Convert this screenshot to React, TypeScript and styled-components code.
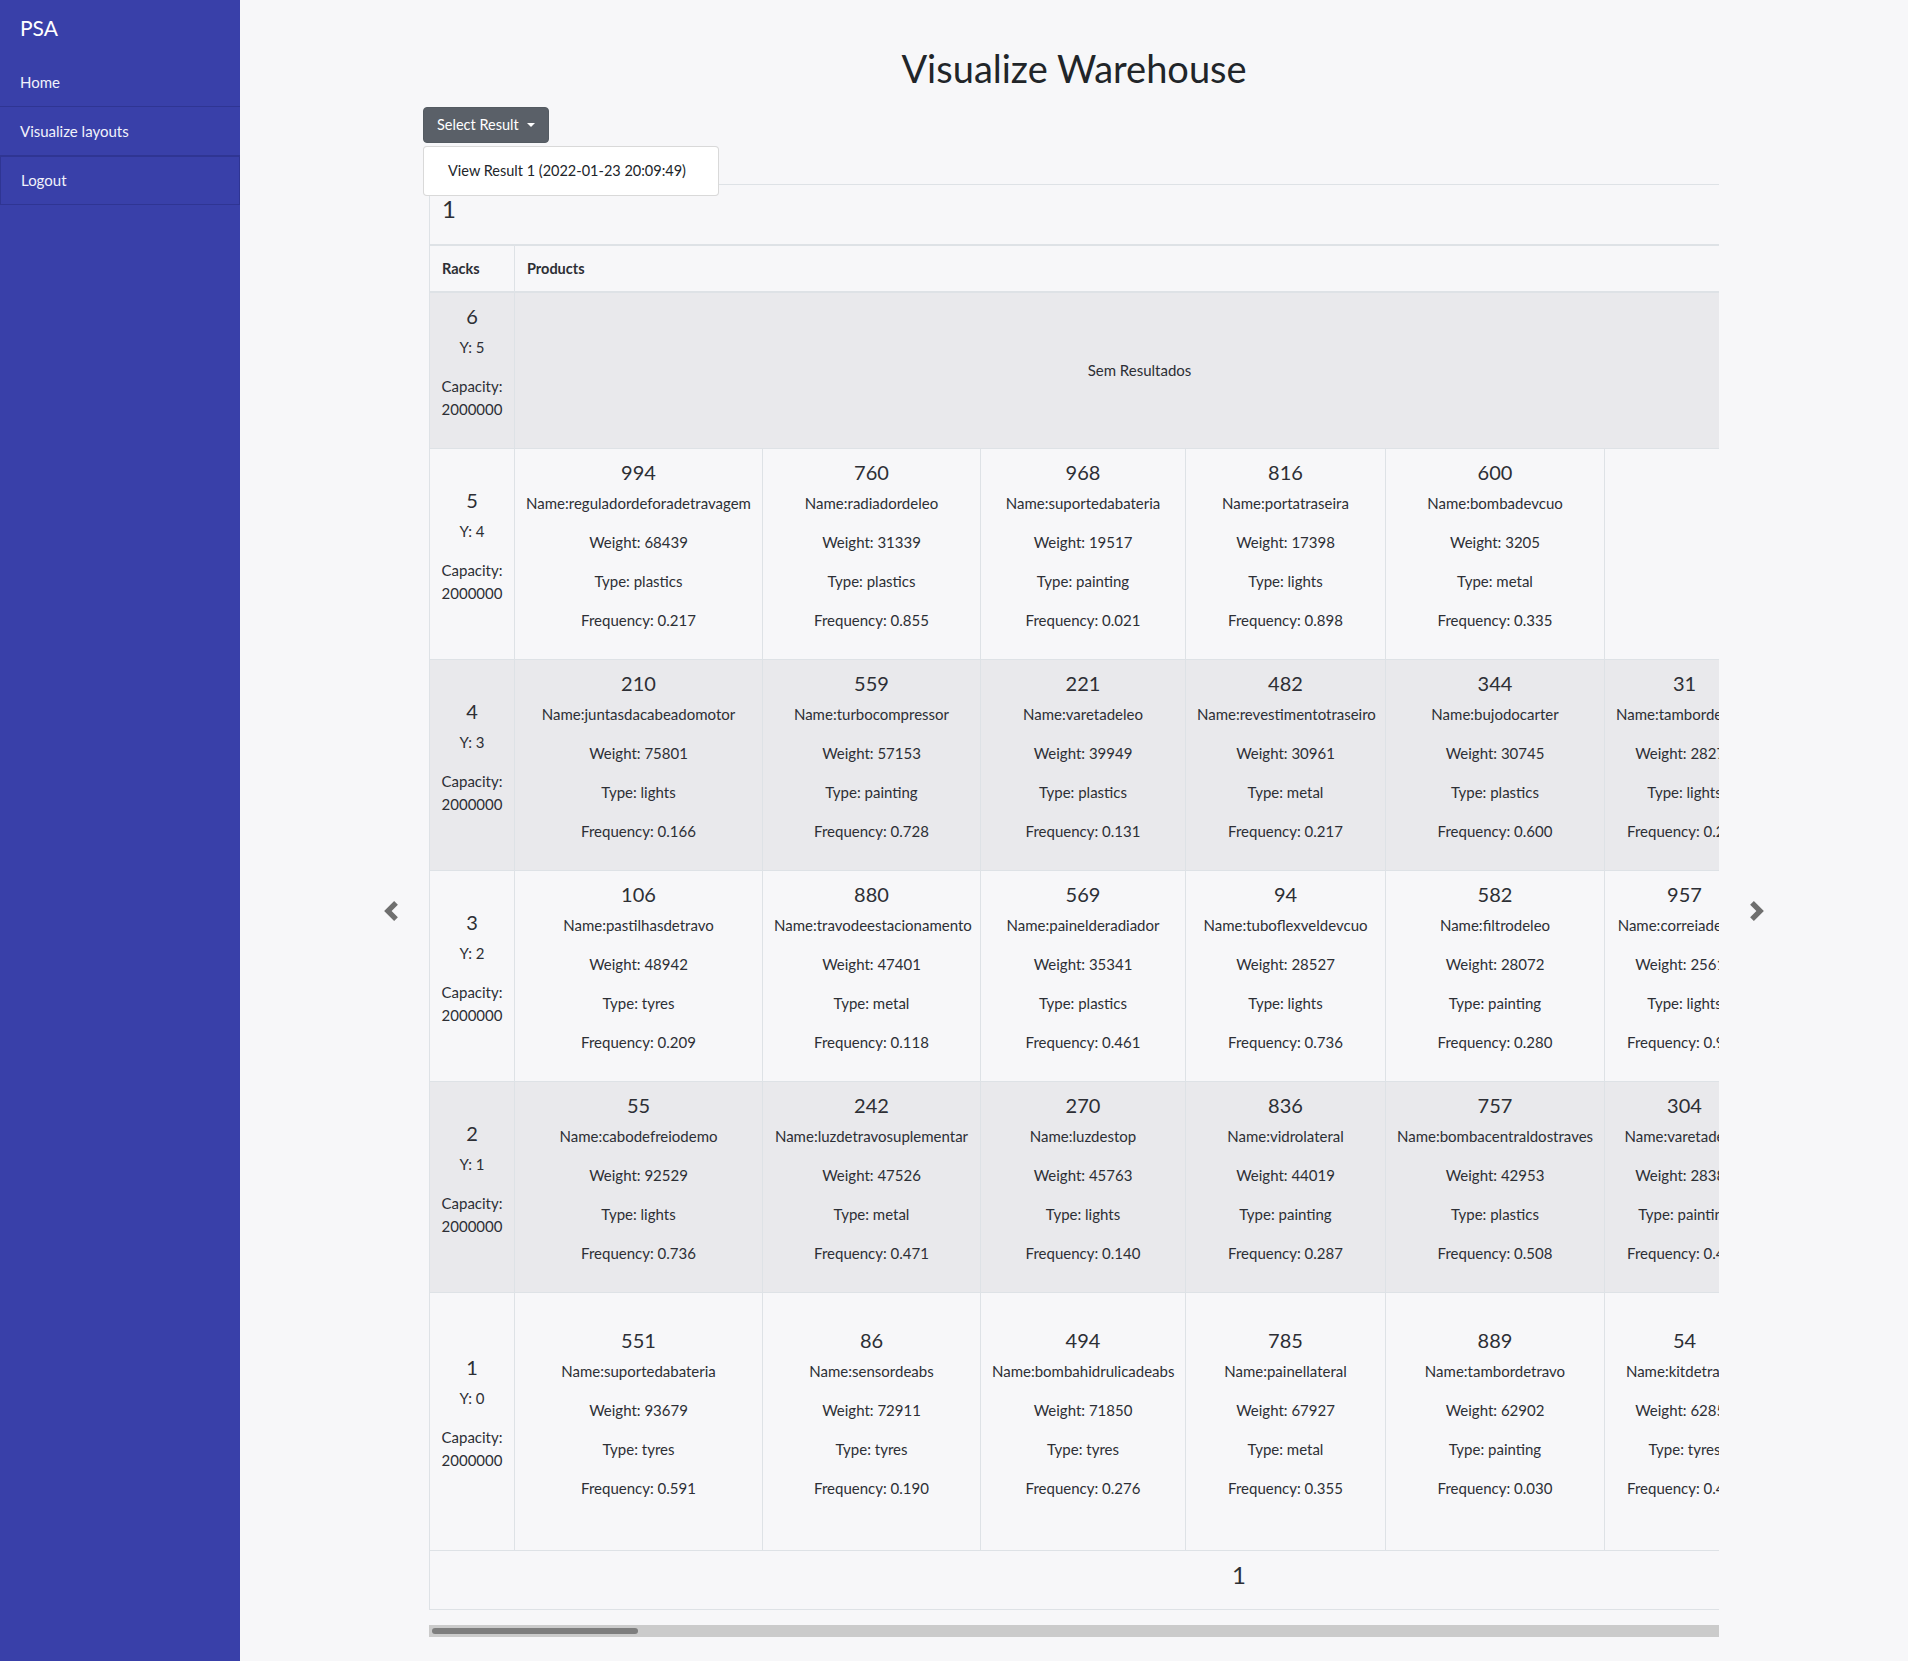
import React from 'react';
import styled, { createGlobalStyle } from 'styled-components';

const GlobalStyle = createGlobalStyle`
  html, body { margin: 0; padding: 0; }
  body {
    font-family: Lato, "Open Sans", "Noto Sans", sans-serif;
    background: #f7f7f9;
    color: #2d2f35;
  }
  * { box-sizing: border-box; }
`;

type Product = { id: number; name: string; weight: number; type: string; freq: string };
type Rack = { id: number; y: number; capacity: number; products: Product[] | null; height?: number };

const VISIBLE_WIDTHS = [248, 218, 205, 200, 219, 160];
const EXTRA_COLS = 31;
const EXTRA_WIDTH = 210;
const RACK_WIDTH = 85;
const VIEW_WIDTH = 1290;
const COL_WIDTHS = [...VISIBLE_WIDTHS, ...Array(EXTRA_COLS).fill(EXTRA_WIDTH)];
const COLS = COL_WIDTHS.length;
const TABLE_WIDTH = RACK_WIDTH + COL_WIDTHS.reduce((a, b) => a + b, 0);
const THUMB_WIDTH = Math.round((VIEW_WIDTH * VIEW_WIDTH) / TABLE_WIDTH);

const p = (id: number, name: string, weight: number, type: string, freq: string): Product => ({ id, name, weight, type, freq });

const PART_NAMES = [
  'amortecedor', 'discodetravao', 'filtrodear', 'velaignicao', 'escovalimpavidros', 'radiador',
  'alternador', 'motordearranque', 'bombadeagua', 'termostato', 'embraiagem', 'caixadevelocidades',
  'farolfrontal', 'retrovisor', 'parachoques', 'capot', 'guardalamas', 'jantes', 'pneu', 'bateria',
  'sensordeoxigenio', 'catalisador', 'silenciador', 'injector', 'bobinadeignicao', 'correiadentada',
  'rolamento', 'homocinetica', 'barraestabilizadora', 'pinca', 'tambor', 'manguera', 'junta',
];
const TYPES = ['plastics', 'painting', 'lights', 'metal', 'tyres'];

function rng(seed: number) {
  let s = seed >>> 0;
  return () => {
    s = (s + 0x6d2b79f5) >>> 0;
    let t = s;
    t = Math.imul(t ^ (t >>> 15), t | 1);
    t ^= t + Math.imul(t ^ (t >>> 7), t | 61);
    return ((t ^ (t >>> 14)) >>> 0) / 4294967296;
  };
}

function extend(list: Product[], seed: number): Product[] {
  const r = rng(seed);
  const out = [...list];
  let w = list[list.length - 1].weight;
  while (out.length < COLS) {
    w = Math.max(120, Math.floor(w - (r() * w) / 14 - 5));
    out.push({
      id: 1 + Math.floor(r() * 999),
      name: PART_NAMES[Math.floor(r() * PART_NAMES.length)],
      weight: w,
      type: TYPES[Math.floor(r() * TYPES.length)],
      freq: r().toFixed(3),
    });
  }
  return out;
}

const RACKS: Rack[] = [
  { id: 6, y: 5, capacity: 2000000, products: null },
  {
    id: 5, y: 4, capacity: 2000000,
    products: [
      p(994, 'reguladordeforadetravagem', 68439, 'plastics', '0.217'),
      p(760, 'radiadordeleo', 31339, 'plastics', '0.855'),
      p(968, 'suportedabateria', 19517, 'painting', '0.021'),
      p(816, 'portatraseira', 17398, 'lights', '0.898'),
      p(600, 'bombadevcuo', 3205, 'metal', '0.335'),
    ],
  },
  {
    id: 4, y: 3, capacity: 2000000,
    products: extend([
      p(210, 'juntasdacabeadomotor', 75801, 'lights', '0.166'),
      p(559, 'turbocompressor', 57153, 'painting', '0.728'),
      p(221, 'varetadeleo', 39949, 'plastics', '0.131'),
      p(482, 'revestimentotraseiro', 30961, 'metal', '0.217'),
      p(344, 'bujodocarter', 30745, 'plastics', '0.600'),
      p(31, 'tambordetravo', 28271, 'lights', '0.243'),
    ], 4),
  },
  {
    id: 3, y: 2, capacity: 2000000,
    products: extend([
      p(106, 'pastilhasdetravo', 48942, 'tyres', '0.209'),
      p(880, 'travodeestacionamento', 47401, 'metal', '0.118'),
      p(569, 'painelderadiador', 35341, 'plastics', '0.461'),
      p(94, 'tuboflexveldevcuo', 28527, 'lights', '0.736'),
      p(582, 'filtrodeleo', 28072, 'painting', '0.280'),
      p(957, 'correiaderoda', 25614, 'lights', '0.912'),
    ], 3),
  },
  {
    id: 2, y: 1, capacity: 2000000,
    products: extend([
      p(55, 'cabodefreiodemo', 92529, 'lights', '0.736'),
      p(242, 'luzdetravosuplementar', 47526, 'metal', '0.471'),
      p(270, 'luzdestop', 45763, 'lights', '0.140'),
      p(836, 'vidrolateral', 44019, 'painting', '0.287'),
      p(757, 'bombacentraldostraves', 42953, 'plastics', '0.508'),
      p(304, 'varetadeleo', 28381, 'painting', '0.445'),
    ], 2),
  },
  {
    id: 1, y: 0, capacity: 2000000, height: 258,
    products: extend([
      p(551, 'suportedabateria', 93679, 'tyres', '0.591'),
      p(86, 'sensordeabs', 72911, 'tyres', '0.190'),
      p(494, 'bombahidrulicadeabs', 71850, 'tyres', '0.276'),
      p(785, 'painellateral', 67927, 'metal', '0.355'),
      p(889, 'tambordetravo', 62902, 'painting', '0.030'),
      p(54, 'kitdetravao', 62850, 'tyres', '0.404'),
    ], 1),
  },
];

/* ---------- layout ---------- */

const Layout = styled.div`
  display: flex;
  min-height: 1661px;
`;

const Sidebar = styled.nav`
  width: 240px;
  flex: none;
  background: #3940a9;
  color: #fff;
`;

const Brand = styled.div`
  height: 58px;
  padding: 14px 20px;
  font-size: 21px;
  line-height: 28px;
`;

const NavItem = styled.a<{ $boxed?: boolean }>`
  display: block;
  padding: 12px 20px;
  font-size: 15px;
  line-height: 24px;
  color: #f1f2fb;
  text-decoration: none;
  border-bottom: 1px solid #2f3593;
  ${(pr) => (pr.$boxed ? 'border: 1px solid #2f3593; padding: 11px 20px 12px;' : '')}
`;

const Main = styled.main`
  flex: 1;
  min-width: 0;
`;

const Title = styled.h1`
  margin: 0;
  padding-top: 45px;
  font-size: 38px;
  line-height: 46px;
  font-weight: 400;
  color: #212529;
  text-align: center;
`;

const Section = styled.section`
  width: 1442px;
  margin: 0 auto;
`;

const Toolbar = styled.div`
  position: relative;
  margin-top: 16px;
  padding-left: 70px;
  height: 36px;
`;

const DropButton = styled.button`
  display: inline-flex;
  align-items: center;
  gap: 8px;
  height: 36px;
  padding: 0 13px;
  border: 1px solid #545b62;
  border-radius: 4px;
  background: #5a6068;
  color: #fff;
  font-family: inherit;
  font-size: 14.5px;
  line-height: 24px;
`;

const Caret = styled.span`
  width: 0;
  height: 0;
  border-left: 4px solid transparent;
  border-right: 4px solid transparent;
  border-top: 4.5px solid #fff;
`;

const Menu = styled.div`
  position: absolute;
  top: 39px;
  left: 70px;
  z-index: 5;
  width: 296px;
  padding: 8px 0;
  background: #fff;
  border: 1px solid rgba(0, 0, 0, 0.15);
  border-radius: 4px;
`;

const MenuItem = styled.div`
  padding: 4px 24px;
  font-size: 14.5px;
  line-height: 24px;
  color: #212529;
  white-space: nowrap;
`;

const Carousel = styled.div`
  display: flex;
  margin-top: 41px;
`;

const Control = styled.div`
  width: 76px;
  flex: none;
  display: flex;
  align-items: center;
  justify-content: center;
`;

const Stage = styled.div`
  width: ${VIEW_WIDTH}px;
  flex: none;
  display: flex;
  flex-direction: column;
`;

const Viewport = styled.div`
  overflow-x: auto;
  overflow-y: hidden;
  scrollbar-width: none;
`;

const ScrollTrack = styled.div`
  height: 12px;
  padding: 3px;
  background: #cbcbcb;
`;

const ScrollThumb = styled.div<{ $w: number }>`
  width: ${(pr) => pr.$w - 6}px;
  height: 6px;
  border-radius: 3px;
  background: #7e7e7e;
`;

const Table = styled.table`
  width: ${TABLE_WIDTH}px;
  table-layout: fixed;
  border-collapse: collapse;
  margin-bottom: 15px;
  color: #2d2f35;
  font-size: 15px;
  line-height: 23px;
`;

const Col = styled.col<{ $w: number }>`
  width: ${(pr) => pr.$w}px;
`;

const TitleCell = styled.th`
  padding: 9px 12px 21px;
  text-align: left;
  font-size: 24px;
  line-height: 29px;
  font-weight: 400;
  border: 1px solid #dee2e6;
  border-bottom-width: 2px;
`;

const HeadCell = styled.th`
  padding: 11px 12px;
  text-align: left;
  font-weight: 700;
  font-size: 14.5px;
  border: 1px solid #dee2e6;
  border-bottom-width: 2px;
`;

const BodyRow = styled.tr<{ $striped: boolean; $height?: number }>`
  background: ${(pr) => (pr.$striped ? '#e9e9ec' : 'transparent')};
  height: ${(pr) => (pr.$height ? `${pr.$height}px` : 'auto')};
`;

const Cell = styled.td`
  padding: 11px;
  text-align: center;
  vertical-align: middle;
  border: 1px solid #dee2e6;
  white-space: nowrap;
  overflow: hidden;
`;

const RackCell = styled(Cell)`
  padding: 11px 8px;
  white-space: normal;
`;

const Heading = styled.div`
  font-size: 20px;
  line-height: 24px;
  margin-bottom: 8px;
`;

const Line = styled.p`
  margin: 0 0 16px;
`;

const FootCell = styled.td`
  padding: 9px 12px 20px 802px;
  text-align: left;
  font-size: 24px;
  line-height: 29px;
  border: 1px solid #dee2e6;
`;

const Chevron = ({ dir }: { dir: 'prev' | 'next' }) => (
  <svg width="20" height="20" viewBox="0 0 8 8" fill="#6f6f6f" aria-hidden>
    {dir === 'prev' ? (
      <path d="M5.25 0l-4 4 4 4 1.5-1.5L4.25 4l2.5-2.5L5.25 0z" />
    ) : (
      <path d="M2.75 0l-1.5 1.5L3.75 4l-2.5 2.5L2.75 8l4-4-4-4z" />
    )}
  </svg>
);

const ProductBlock = ({ item }: { item: Product }) => (
  <>
    <Heading>{item.id}</Heading>
    <Line>Name:{item.name}</Line>
    <Line>Weight: {item.weight}</Line>
    <Line>Type: {item.type}</Line>
    <Line>Frequency: {item.freq}</Line>
  </>
);

export default function App() {
  return (
    <>
      <GlobalStyle />
      <Layout>
        <Sidebar>
          <Brand>PSA</Brand>
          <NavItem href="#">Home</NavItem>
          <NavItem href="#">Visualize layouts</NavItem>
          <NavItem href="#" $boxed>Logout</NavItem>
        </Sidebar>
        <Main>
          <Title>Visualize Warehouse</Title>
          <Section>
            <Toolbar>
              <DropButton type="button">
                Select Result <Caret />
              </DropButton>
              <Menu>
                <MenuItem>View Result 1 (2022-01-23 20:09:49)</MenuItem>
              </Menu>
            </Toolbar>
            <Carousel>
              <Control><Chevron dir="prev" /></Control>
              <Stage>
                <Viewport>
                  <Table>
                    <colgroup>
                      <Col $w={RACK_WIDTH} />
                      {COL_WIDTHS.map((w, i) => (
                        <Col key={i} $w={w} />
                      ))}
                    </colgroup>
                    <thead>
                      <tr><TitleCell colSpan={COLS + 1}>1</TitleCell></tr>
                      <tr>
                        <HeadCell>Racks</HeadCell>
                        <HeadCell colSpan={COLS}>Products</HeadCell>
                      </tr>
                    </thead>
                    <tbody>
                      {RACKS.map((rack, ri) => (
                        <BodyRow key={rack.id} $striped={ri % 2 === 0} $height={rack.height}>
                          <RackCell>
                            <Heading>{rack.id}</Heading>
                            <Line>Y: {rack.y}</Line>
                            <Line>Capacity: {rack.capacity}</Line>
                          </RackCell>
                          {rack.products === null ? (
                            <Cell colSpan={6}>Sem Resultados</Cell>
                          ) : (
                            Array.from({ length: COLS }, (_, ci) => {
                              const item = rack.products![ci];
                              return <Cell key={ci}>{item ? <ProductBlock item={item} /> : null}</Cell>;
                            })
                          )}
                        </BodyRow>
                      ))}
                    </tbody>
                    <tfoot>
                      <tr><FootCell colSpan={COLS + 1}>1</FootCell></tr>
                    </tfoot>
                  </Table>
                </Viewport>
                <ScrollTrack>
                  <ScrollThumb $w={THUMB_WIDTH} />
                </ScrollTrack>
              </Stage>
              <Control><Chevron dir="next" /></Control>
            </Carousel>
          </Section>
        </Main>
      </Layout>
    </>
  );
}
